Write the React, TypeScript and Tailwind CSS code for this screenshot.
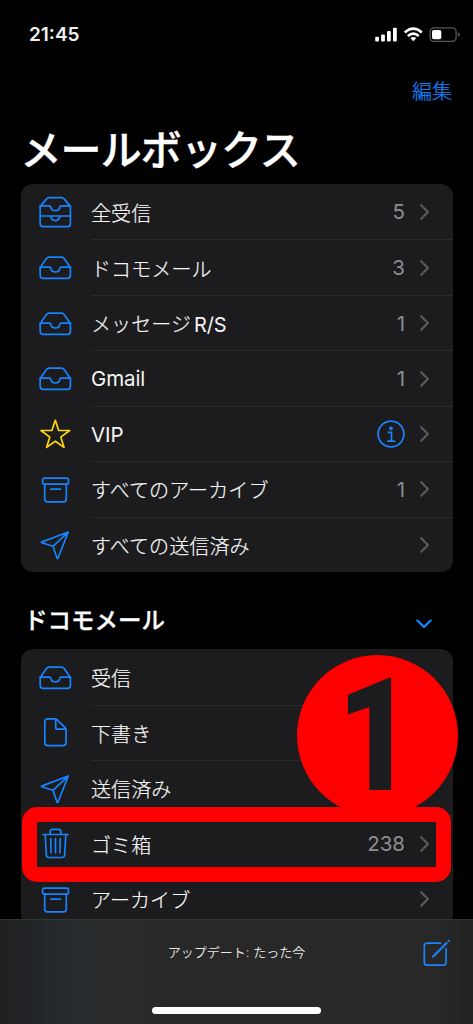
import { ReactNode } from "react";

type IconName = "allInbox" | "inbox" | "star" | "archive" | "send" | "draft" | "trash";

interface IMailbox {
  icon: IconName;
  title: string;
  count?: number;
  info?: boolean;
}

const favorites: IMailbox[] = [
  { icon: "allInbox", title: "全受信", count: 5 },
  { icon: "inbox", title: "ドコモメール", count: 3 },
  { icon: "inbox", title: "メッセージR/S", count: 1 },
  { icon: "inbox", title: "Gmail", count: 1 },
  { icon: "star", title: "VIP", info: true },
  { icon: "archive", title: "すべてのアーカイブ", count: 1 },
  { icon: "send", title: "すべての送信済み" },
];

const docomo: IMailbox[] = [
  { icon: "inbox", title: "受信" },
  { icon: "draft", title: "下書き" },
  { icon: "send", title: "送信済み" },
  { icon: "trash", title: "ゴミ箱", count: 238 },
  { icon: "archive", title: "アーカイブ" },
];

const icons: Record<IconName, ReactNode> = {
  allInbox: (
    <>
      <path d="M3.2 12.4 9.3 5.1Q10.5 3.7 12.3 3.7H24.3Q26.1 3.7 27.3 5.1L33.4 12.4V29.7Q33.4 32.7 30.4 32.7H6.2Q3.2 32.7 3.2 29.7Z" />
      <path d="M3.2 11.8H12.6Q13.6 11.8 13.7 12.8Q14.3 16.7 18.3 16.7T22.9 12.8Q23 11.8 24 11.8H33.4" />
      <path d="M3.4 22H33.2M13.8 22.4Q14.4 26.6 18.3 26.6T22.8 22.4" />
    </>
  ),
  inbox: (
    <>
      <path d="M3.2 18.6 9.3 9.7Q10.5 8.1 12.3 8.1H24.3Q26.1 8.1 27.3 9.7L33.4 18.6V26.4Q33.4 29.3 30.4 29.3H6.2Q3.2 29.3 3.2 26.4Z" />
      <path d="M3.2 18.2H12.6Q13.6 18.2 13.7 19.2Q14.3 23 18.3 23T22.9 19.2Q23 18.2 24 18.2H33.4" />
    </>
  ),
  star: (
    <path d="M18.3 5.3 21.7 15.4 32.6 15.5 23.8 22.1 27 32.4 18.3 26.2 9.6 32.4 12.8 22.1 4 15.5 14.9 15.4Z" />
  ),
  archive: (
    <>
      <rect x="5.6" y="7.2" width="25.9" height="5.9" rx="1.8" />
      <path d="M7.7 13.2V28.1Q7.7 30.9 10.5 30.9H26.5Q29.3 30.9 29.3 28.1V13.2M13.8 18.2H23.4" />
    </>
  ),
  send: (
    <path d="M31.3 6 4.7 16.1Q4 16.5 4.8 16.8L16 20.3 20 32Q20.5 32.9 21 32ZM31.3 6 16 20.3" />
  ),
  draft: (
    <path d="M10.8 4.8H17.8Q19.2 4.8 20.2 5.8L28.1 13.7Q29.1 14.7 29.1 16.1V28.6Q29.1 31.6 26.1 31.6H10.8Q7.8 31.6 7.8 28.6V7.8Q7.8 4.8 10.8 4.8ZM18.7 5V13.4Q18.7 15.2 20.5 15.2H28.8" />
  ),
  trash: (
    <>
      <path d="M5.9 9.5H31.1M13.2 9.2V6.7Q13.2 4.4 15.5 4.4H21.5Q23.8 4.4 23.8 6.7V9.2" />
      <path d="M8.2 9.8 9.3 29.8Q9.5 32.5 12 32.5H25Q27.5 32.5 27.7 29.8L28.8 9.8M13.7 13.6 14.1 27.8M18.5 13.6V27.8M23.3 13.6 22.9 27.8" />
    </>
  ),
};

function BoxIcon({ name }: { name: IconName }) {
  return (
    <svg
      viewBox="0 0 36 36"
      className={`size-9 shrink-0 ${name === "star" ? "text-[#ffd60a]" : "text-[#1684fe]"}`}
      fill="none"
      stroke="currentColor"
      strokeWidth="1.7"
      strokeLinecap="round"
      strokeLinejoin="round"
    >
      {icons[name]}
    </svg>
  );
}

function InfoIcon() {
  return (
    <svg viewBox="0 0 28 28" className="size-7" fill="none" stroke="#1684fe" strokeWidth="1.7">
      <circle cx="14" cy="14" r="12.9" />
      <circle cx="13.9" cy="8.3" r="1.9" fill="#1684fe" stroke="none" />
      <path d="M11.4 12.4H14.5V20.9M10.9 21.2H17.6" strokeLinecap="round" />
    </svg>
  );
}

function MailboxList({ items }: { items: IMailbox[] }) {
  return (
    <ul className="ml-[20.5px] w-[432.5px] overflow-hidden rounded-[12px] bg-[#1c1c1e]">
      {items.map((item, index) => (
        <li key={item.title} className="flex h-[55.45px] items-center pl-[16.5px]">
          <BoxIcon name={item.icon} />
          <div
            className={`ml-[18px] flex h-full flex-1 items-center pr-[22px] ${
              index > 0 ? "border-t border-[#2b2b2d]" : ""
            }`}
          >
            <span
              className={`flex-1 whitespace-nowrap text-[#f5f5f5] ${
                item.title === "Gmail" || item.title === "VIP"
                  ? "pt-0.5 text-[20.5px] tracking-[-0.1px]"
                  : "pt-1 text-[20px] font-light tracking-[0.1px] [-webkit-text-stroke:0.2px_#f5f5f5]"
              }`}
            >
              {item.title.replace("R/S", "")}
              {item.title.endsWith("R/S") && (
                <span className="ml-[3px] font-normal tracking-[-0.2px] [-webkit-text-stroke:0]">R/S</span>
              )}
            </span>
            {item.count !== undefined && (
              <span className="pt-0.5 text-[20.5px] text-[#8d8d93]">{item.count}</span>
            )}
            {item.info && <InfoIcon />}
            <svg viewBox="0 0 12 18" className="ml-[14px] h-[18px] w-3" fill="none" stroke="#5b5b5f" strokeWidth="2.1" strokeLinecap="round" strokeLinejoin="round">
              <path d="M2.2 2.2 8.9 9 2.2 15.8" />
            </svg>
          </div>
        </li>
      ))}
    </ul>
  );
}

function StatusBar() {
  return (
    <div className="flex h-[68px] items-center justify-between pl-[29px] pr-[13px]">
      <span className="pt-0.5 text-[19px] font-semibold text-[#f0f0f0]">21:45</span>
      <svg viewBox="0 0 86 20" className="h-5 w-[86px]" fill="#fff">
        <rect x="1.2" y="12.8" width="3.8" height="4.7" rx="1" />
        <rect x="7.1" y="10.4" width="3.8" height="7.1" rx="1" />
        <rect x="13" y="7" width="3.8" height="10.5" rx="1" />
        <rect x="19" y="3.8" width="3.8" height="13.7" rx="1" />
        <g fill="none" stroke="#fff" strokeWidth="2.5">
          <path d="M30.7 8.5Q39.3.8 47.9 8.5" />
          <path d="M33.8 12Q39.3 7.2 44.8 12" />
        </g>
        <path d="M36.3 14.1Q39.3 11.8 42.3 14.1L39.3 17.3Z" />
        <rect x="56.1" y="3.9" width="26" height="13.4" rx="3.8" fill="none" stroke="#58585a" strokeWidth="1.3" />
        <rect x="58" y="5.9" width="9.3" height="9.4" rx="1.8" />
        <path d="M83.8 8.2Q86 9 86 10.5T83.8 12.9Z" fill="#58585a" />
      </svg>
    </div>
  );
}

export default function App() {
  return (
    <div className="relative flex h-[1024px] w-[473px] flex-col overflow-hidden bg-black font-['Inter','Noto_Sans_CJK_JP',sans-serif] text-white">
      <StatusBar />
      <div className="flex h-[46px] items-center justify-end pt-0.5 pr-[21px] text-[20px] font-light text-[#1684fe] [-webkit-text-stroke:0.2px_#1684fe]">
        編集
      </div>
      <h1 className="flex h-[70px] items-center pt-0.5 pl-[20.5px] text-[41px] leading-none font-medium tracking-[-0.9px] [-webkit-text-stroke:0.4px_#fff]">
        メールボックス
      </h1>

      <MailboxList items={favorites} />

      <div className="flex h-[77px] shrink-0 items-center justify-between pt-[20px] pr-[40px] pl-[24px]">
        <h2 className="text-[23.5px] leading-none font-medium [-webkit-text-stroke:0.3px_#fff]">
          ドコモメール
        </h2>
        <svg viewBox="0 0 18 12" className="mt-1.5 h-3 w-[18px]" fill="none" stroke="#1684fe" strokeWidth="2.4" strokeLinecap="round" strokeLinejoin="round">
          <path d="M2.4 2.5 9 9 15.6 2.5" />
        </svg>
      </div>

      <div className="h-[269.8px] shrink-0 overflow-hidden">
        <MailboxList items={docomo} />
      </div>

      <footer className="flex flex-1 flex-col border-t border-[#343436] bg-[linear-gradient(90deg,#1e1f20_0%,#25292c_12%,#292c2e_18%,#2b2b2b_26%,#282828_38%,#282828_92%,#222222_100%)]">
        <div className="grid h-[68px] grid-cols-[1fr_auto_1fr] items-center">
          <span />
          <span className="pb-0.5 text-[13px] font-[350] text-[#e8e8e8]">アップデート: たった今</span>
          <svg viewBox="0 0 30 30" className="mr-[21px] size-[30px] justify-self-end" fill="none" stroke="#1684fe" strokeWidth="1.7" strokeLinecap="round">
            <path d="M18.5 4.2H5.3Q2.3 4.2 2.3 7.2V23.2Q2.3 26.2 5.3 26.2H21Q24 26.2 24 23.2V9.5" />
            <path d="M11.1 17.4 24.6 3.9M26.6 1.9 26.8 1.7" strokeWidth="2.1" />
          </svg>
        </div>
        <div className="mt-[19px] h-[7px] w-[169px] self-center rounded-full bg-white" />
      </footer>

      {/* callout marks over the trash row */}
      <div className="absolute top-[655px] left-[297px] flex size-[161px] items-center justify-center rounded-full bg-[#ff0000]">
        <span className="-translate-x-[2px] translate-y-px scale-x-[0.84] font-['Roboto',sans-serif] text-[157px] leading-none font-black text-[#1c1c1e]">
          1
        </span>
      </div>
      <div className="absolute top-[807px] left-[22px] h-[75px] w-[429px] rounded-[15px] border-[15px] border-[#ff0000]" />
    </div>
  );
}
